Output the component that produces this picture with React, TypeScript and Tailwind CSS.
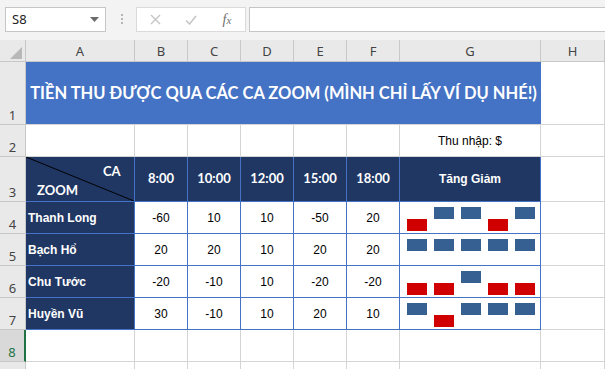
import React from "react";

const data = [
  { name: "Thanh Long", v: [-60, 10, 10, -50, 20] },
  { name: "Bạch Hổ", v: [20, 20, 10, 20, 20] },
  { name: "Chu Tước", v: [-20, -10, 10, -20, -20] },
  { name: "Huyền Vũ", v: [30, -10, 10, 20, 10] },
];

const times = ["8:00", "10:00", "12:00", "15:00", "18:00"];
const letters = ["A", "B", "C", "D", "E", "F", "G", "H"];

function RowNum({ n, active }: { n?: number; active?: boolean }) {
  return (
    <div
      className={
        "flex items-end justify-center pb-[1px] border-b border-[#c8c8c8] text-[13px] leading-[16px] font-['Noto_Sans',sans-serif] " +
        (active
          ? "bg-[#d9d9d9] text-[#217346] border-r-2 border-r-[#217346]"
          : "bg-[#e9e9e9] text-[#444] border-r border-r-[#c8c8c8]")
      }
    >
      {n}
    </div>
  );
}

function Blank() {
  return <div className="bg-white border-r border-b border-[#d4d4d4]" />;
}

function WinLoss({ v }: { v: number[] }) {
  return (
    <div className="bg-white border-r border-b border-[#4472c4] flex pl-[7px] gap-[7px]">
      {v.map((x, i) => (
        <div key={i} className="w-[20px] flex flex-col pt-[5px]">
          {x >= 0 ? (
            <div className="h-[12px] bg-[#376092]" />
          ) : (
            <div className="h-[12px] mt-[12px] bg-[#d00000]" />
          )}
        </div>
      ))}
    </div>
  );
}

export default function App() {
  return (
    <div className="w-[605px] h-[369px] overflow-hidden bg-white select-none">
      {/* Formula bar */}
      <div className="h-[40px] bg-[#f3f3f3] flex items-start pt-[7px]">
        <div className="ml-[5px] w-[101px] h-[25px] bg-white border border-[#c6c6c6] flex items-center pl-[6px] pr-[6px] justify-between">
          <span className="text-[13px] text-[#222] font-['Noto_Sans',sans-serif]">S8</span>
          <svg width="9" height="5" viewBox="0 0 9 5">
            <path d="M0 0h9L4.5 5z" fill="#6b6b6b" />
          </svg>
        </div>
        <div className="ml-[15px] mt-[7px] flex flex-col gap-[2px]">
          <div className="w-[2px] h-[2px] bg-[#b5b5b5]" />
          <div className="w-[2px] h-[2px] bg-[#b5b5b5]" />
          <div className="w-[2px] h-[2px] bg-[#b5b5b5]" />
        </div>
        <div className="ml-[13px] w-[110px] h-[25px] bg-white border border-[#dadada] flex items-center">
          <div className="w-[36px] flex justify-center">
            <svg width="11" height="11" viewBox="0 0 11 11">
              <path d="M1 1l9 9M10 1l-9 9" stroke="#c4c4c4" strokeWidth="1.4" />
            </svg>
          </div>
          <div className="w-[36px] flex justify-center">
            <svg width="12" height="10" viewBox="0 0 12 10">
              <path d="M1 5.5l3.5 3.5L11 1" stroke="#c4c4c4" strokeWidth="1.5" fill="none" />
            </svg>
          </div>
          <div className="w-[36px] flex justify-center items-baseline font-['Liberation_Serif',serif] italic text-[#6e6e6e]">
            <span className="text-[14px]">f</span>
            <span className="text-[11px]">x</span>
          </div>
        </div>
        <div className="ml-[3px] flex-1 h-[25px] bg-white border border-r-0 border-[#c6c6c6]" />
      </div>

      {/* Sheet */}
      <div className="grid grid-cols-[26px_109px_53px_53px_53px_53px_53px_141px_64px] grid-rows-[22px_63px_32px_45px_32px_32px_32px_32px_32px_32px] font-['Liberation_Sans',Arial,sans-serif]">
        {/* header row */}
        <div className="bg-[#e9e9e9] border-r border-b border-[#c8c8c8] flex items-end justify-end pr-[3px] pb-[2px]">
          <svg width="12" height="12" viewBox="0 0 12 12">
            <path d="M12 0V12H0z" fill="#b8b8b8" />
          </svg>
        </div>
        {letters.map((l) => (
          <div
            key={l}
            className="bg-[#e9e9e9] border-r border-b border-[#c8c8c8] flex items-center justify-center pt-[3px] text-[13px] text-[#444] font-['Noto_Sans',sans-serif]"
          >
            {l}
          </div>
        ))}

        {/* row 1 */}
        <RowNum n={1} />
        <div className="col-span-7 bg-[#4472c4] border-b border-[#d4d4d4] flex items-center justify-center text-white font-['Lato',sans-serif] font-bold text-[16.5px] whitespace-nowrap">
          TIỀN THU ĐƯỢC QUA CÁC CA ZOOM (MÌNH CHỈ LẤY VÍ DỤ NHÉ!)
        </div>
        <Blank />

        {/* row 2 */}
        <RowNum n={2} />
        <Blank />
        <Blank />
        <Blank />
        <Blank />
        <Blank />
        <Blank />
        <div className="bg-white border-r border-b border-[#d4d4d4] flex items-center justify-center text-[12px] text-black">
          Thu nhập: $
        </div>
        <Blank />

        {/* row 3 */}
        <RowNum n={3} />
        <div className="relative bg-[#203764] border-r border-b border-[#4472c4] text-white font-['Lato',sans-serif] font-bold text-[13px]">
          <svg className="absolute inset-0" width="108" height="44" viewBox="0 0 108 44">
            <path d="M0 0L108 44" stroke="#000" strokeWidth="1" />
          </svg>
          <span className="absolute left-[77px] top-[5px]">CA</span>
          <span className="absolute left-[11px] top-[24px]">ZOOM</span>
        </div>
        {times.map((t) => (
          <div
            key={t}
            className="bg-[#203764] border-r border-b border-[#4472c4] flex items-center justify-center text-white font-['Lato',sans-serif] font-bold text-[13px]"
          >
            {t}
          </div>
        ))}
        <div className="bg-[#203764] border-r border-b border-[#4472c4] flex items-center justify-center text-white font-bold text-[12px]">
          Tăng Giảm
        </div>
        <Blank />

        {/* rows 4-7 */}
        {data.map((r, i) => (
          <React.Fragment key={r.name}>
            <RowNum n={i + 4} />
            <div className="bg-[#203764] border-r border-b border-[#4472c4] flex items-center pl-[2px] text-white font-bold text-[12px]">
              {r.name}
            </div>
            {r.v.map((x, j) => (
              <div
                key={j}
                className="bg-white border-r border-b border-[#4472c4] flex items-center justify-center text-[12px] text-black"
              >
                {x}
              </div>
            ))}
            <WinLoss v={r.v} />
            <Blank />
          </React.Fragment>
        ))}

        {/* row 8 */}
        <RowNum n={8} active />
        {letters.map((l) => (
          <Blank key={"r8" + l} />
        ))}

        {/* row 9, only its top edge shows */}
        <RowNum />
        {letters.map((l) => (
          <Blank key={"r9" + l} />
        ))}
      </div>
    </div>
  );
}
